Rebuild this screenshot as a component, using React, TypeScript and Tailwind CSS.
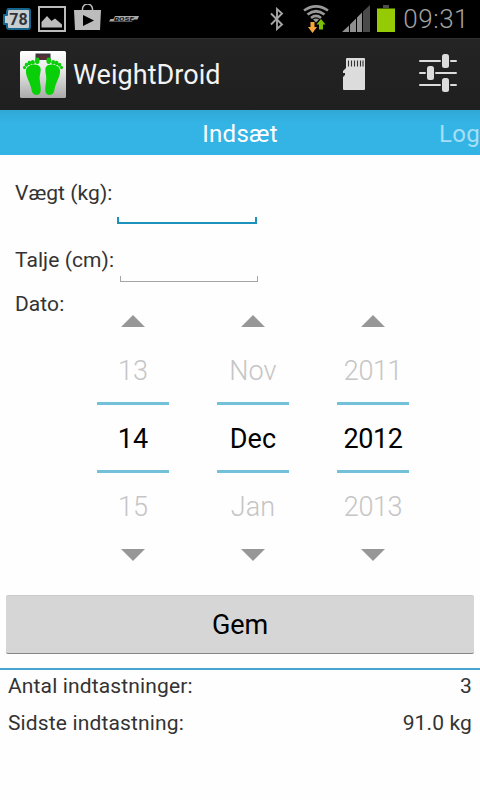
import clsx from 'clsx';

type PickerColumn = {
  id: string;
  previous: string;
  current: string;
  next: string;
};

const PICKER_COLUMNS: PickerColumn[] = [
  { id: 'day', previous: '13', current: '14', next: '15' },
  { id: 'month', previous: 'Nov', current: 'Dec', next: 'Jan' },
  { id: 'year', previous: '2011', current: '2012', next: '2013' },
];

function BatteryBadge() {
  return (
    <svg className="ml-[3px] h-[22px] w-7" viewBox="0 0 28 22" aria-hidden="true">
      <path d="M5 1h20q2 0 2 2v16q0 2-2 2H6q-2 0-2-2v-3H1V7h3V3z" fill="#c8cdd0" stroke="#17658d" strokeWidth="2" strokeLinejoin="round" />
      <text x="15.500" y="16.800" textAnchor="middle" fontFamily="Roboto, sans-serif" fontWeight="700" fontSize="16" fill="#30343a">
        78
      </text>
    </svg>
  );
}

function PictureIcon() {
  return (
    <svg className="ml-[7px] h-[26px] w-7" viewBox="0 0 28 26" aria-hidden="true">
      <path d="M1 1h26v24H1z" fill="none" stroke="#bcbcbc" strokeWidth="2" />
      <path d="M3.500 21.500v-5.500l5.500-6 4.500 5 3.500-2.500 7 6v3z" fill="#bcbcbc" />
    </svg>
  );
}

function PlayStoreIcon() {
  return (
    <svg className="mb-1 ml-2 h-[26px] w-[27px]" viewBox="0 0 27 26" aria-hidden="true">
      <path d="M8.500 7V5a4.500 4.500 0 0 1 10 0v2" fill="none" stroke="#bcbcbc" strokeWidth="1.500" />
      <path d="M0 6h27l-1 20H1z" fill="#bcbcbc" />
      <path d="M9 11l11 5.500L9 22z" fill="#000" />
    </svg>
  );
}

function HeadsetLogo() {
  return (
    <svg className="ml-[8px] h-2 w-[30px]" viewBox="0 0 30 8" aria-hidden="true">
      <path d="M6 1h24l-1.500 3.500H25L23 6.500H0L1.500 4h3z" fill="#aaa" />
      <text x="5" y="6" fontFamily="Roboto, sans-serif" fontWeight="900" fontStyle="italic" fontSize="6" textLength="20" lengthAdjust="spacingAndGlyphs" fill="#151515">
        BOSE
      </text>
    </svg>
  );
}

function BluetoothIcon() {
  return (
    <svg className="h-6 w-4" viewBox="0 0 16 24" aria-hidden="true">
      <path d="M2 6.500l11 11L8 22V2l5 4.500-11 11" fill="none" stroke="#a4a4a4" strokeWidth="1.900" />
    </svg>
  );
}

function WifiIcon() {
  return (
    <svg className="ml-[18px] h-7 w-[26px]" viewBox="0 0 26 28" aria-hidden="true">
      <g fill="none" stroke="#989898" strokeWidth="2.700">
        <path d="M1 5.500Q13-2.600 25 5.500" />
        <path d="M4.500 9.500Q13 3 21.500 9.500" />
        <path d="M8 13Q13 8.800 18 13" />
      </g>
      <path d="M10 14.500q3-2 6 0l-3 3z" fill="#989898" />
      <path d="M7.500 17h4v5h2.500l-4.500 6L5 22h2.500z" fill="#f6a63c" />
      <path d="M16 24.500h4v-5h2.500L18 14l-4.500 5.500H16z" fill="#7cbf08" />
    </svg>
  );
}

function SignalIcon() {
  return (
    <svg className="ml-[13px] h-[27px] w-7" viewBox="0 0 28 27" aria-hidden="true">
      <path d="M0 27l7-6.500V27zM8 19.500l6-6V27H8zM15 12.500l5-5V27h-5z" fill="#8f8f8f" />
      <path d="M21 6.500L28 0v27h-7z" fill="#4a4a4a" />
    </svg>
  );
}

function StatusBattery() {
  return (
    <svg className="ml-[7px] h-[27px] w-[18px]" viewBox="0 0 18 27" aria-hidden="true">
      <path d="M6 0h6v3H6z" fill="#4c4c4c" />
      <path d="M0 3.500h18V27H0z" fill="#94cb05" />
    </svg>
  );
}

function StatusBar() {
  return (
    <div className="flex h-[38px] items-center bg-black">
      <BatteryBadge />
      <PictureIcon />
      <PlayStoreIcon />
      <HeadsetLogo />
      <div className="mb-px ml-auto flex items-center">
        <BluetoothIcon />
        <WifiIcon />
        <SignalIcon />
        <StatusBattery />
      </div>
      <span className="mr-[11px] ml-2 text-[26px] leading-none font-light tracking-[0.5px] whitespace-nowrap text-[#a3a3a3]">
        09:31
      </span>
    </div>
  );
}

const TOES = [
  { cx: 4.5, cy: 16.5, r: 1.5 },
  { cx: 6.5, cy: 13.7, r: 1.7 },
  { cx: 9.4, cy: 12, r: 1.9 },
  { cx: 12.8, cy: 11.2, r: 2 },
];

function Foot() {
  return (
    <g fill="#08cf08">
      <path d="M6 19C7 13 19 11.500 20.500 17c.8 4-1.300 7-.7 12 .3 4 1.200 7 .9 10.500C20.500 45.500 13 45.500 11.800 40 10.500 31 5 25 6 19z" />
      <ellipse cx="17.300" cy="9.800" rx="2.300" ry="3.200" />
      {TOES.map((toe) => (
        <ellipse key={toe.cx} cx={toe.cx} cy={toe.cy} rx={toe.r} ry={toe.r + 0.3} />
      ))}
    </g>
  );
}

function AppLogo() {
  return (
    <svg className="h-[47px] w-[46px]" viewBox="0 0 46 47" aria-hidden="true">
      <defs>
        <linearGradient id="scale" x1="0" y1="0" x2="0" y2="1">
          <stop offset="0" stopColor="#fff" />
          <stop offset="0.45" stopColor="#e4e4e4" />
          <stop offset="1" stopColor="#aaa" />
        </linearGradient>
      </defs>
      <rect width="46" height="47" rx="1.500" fill="url(#scale)" />
      <path d="M15.500 2.500h15V9h-15z" fill="#3c3539" />
      <path d="M18 4.500h10V9H18z" fill="#572f37" />
      <Foot />
      <g transform="matrix(-1 0 0 1 46 0)">
        <Foot />
      </g>
    </svg>
  );
}

function SdCardIcon() {
  return (
    <svg className="h-8 w-[22px]" viewBox="0 0 22 32" aria-hidden="true">
      <path d="M4 0h17q1 0 1 1v30q0 1-1 1H1q-1 0-1-1V19l2-2v-2H0v-2l3-3V1q0-1 1-1z" fill="#dcdcdc" />
      <path d="M5.500 2.500v6M8.500 2.500v6M11.500 2.500v6M14.500 2.500v6M17.500 2.500v6M20 2.500v6" stroke="#333" strokeWidth="1.100" />
    </svg>
  );
}

function SlidersIcon() {
  return (
    <svg className="h-[38px] w-[38px]" viewBox="0 0 38 38" aria-hidden="true">
      <path d="M1 7h20M32 7h5M1 19h5M17 19h20M1 31h20M32 31h5" stroke="#dcdcdc" strokeWidth="2" strokeLinecap="round" />
      <g fill="#dcdcdc">
        <rect x="23" y="0" width="7" height="14" rx="2.500" />
        <rect x="8" y="12" width="7" height="14" rx="2.500" />
        <rect x="23" y="24" width="7" height="14" rx="2.500" />
      </g>
    </svg>
  );
}

function ActionBar() {
  return (
    <header className="flex h-[72px] items-center border-t border-[#303030] bg-gradient-to-b from-[#242424] to-[#1f1f1f] pr-[23px] pl-5">
      <AppLogo />
      <h1 className="ml-[7px] text-[27px] leading-8 tracking-[0.05px] whitespace-nowrap text-[#f3f3f3]">WeightDroid</h1>
      <button type="button" aria-label="SD-kort" className="mb-0.5 ml-auto">
        <SdCardIcon />
      </button>
      <button type="button" aria-label="Indstillinger" className="mb-[3px] ml-[54px]">
        <SlidersIcon />
      </button>
    </header>
  );
}

function Tabs() {
  return (
    <nav className="grid h-[45px] grid-cols-[1fr_80px_1fr] items-center overflow-hidden bg-gradient-to-b from-[#30a8d6] via-[#34b4e5] via-30% to-[#34b4e5] pt-0.5 text-2xl tracking-[0.3px]">
      <span className="col-start-2 text-center whitespace-nowrap text-white">Indsæt</span>
      <span className="text-right whitespace-nowrap text-[#a5dff6]">Log</span>
    </nav>
  );
}

function Arrow({ down }: { down?: boolean }) {
  return (
    <svg className="h-3 w-6" viewBox="0 0 24 12" aria-hidden="true">
      <path d={down ? 'M0 0h24L12 12z' : 'M0 12h24L12 0z'} fill="#979797" />
    </svg>
  );
}

function NumberPicker({ column }: { column: PickerColumn }) {
  return (
    <div
      className={clsx(
        'flex w-[72px] flex-col items-center text-[27px] leading-8',
        column.id === 'year' ? 'tracking-[-0.4px]' : 'tracking-[0.1px]',
      )}
    >
      <Arrow />
      <span className="mt-7 font-light text-[#c5c5c5]">{column.previous}</span>
      <span className="mt-[15px] flex h-[71px] w-full items-center justify-center border-y-[3px] border-[#72c1d9] pt-0.5 text-black">
        {column.current}
      </span>
      <span className="mt-[18px] font-light text-[#c5c5c5]">{column.next}</span>
      <div className="mt-[26px] flex">
        <Arrow down />
      </div>
    </div>
  );
}

function Field({ label, focused }: { label: string; focused?: boolean }) {
  return (
    <label className={clsx('flex pl-[15px]', focused ? 'h-[69px]' : 'h-[58px]')}>
      <span className={clsx('whitespace-nowrap', focused ? 'w-[102px] pt-[25px]' : 'w-[105px] pt-[23px]')}>{label}</span>
      <input
        type="text"
        className={clsx(
          'h-full bg-[linear-gradient(currentColor,currentColor),linear-gradient(currentColor,currentColor)] bg-[position:left_bottom,right_bottom] bg-no-repeat outline-none',
          focused
            ? 'w-[140px] border-b-2 border-[#1c91bb] bg-[size:2px_5px] text-[#1c91bb]'
            : 'w-[138px] border-b border-[#a5a5a5] bg-[size:1px_5px] text-[#a5a5a5]',
        )}
      />
    </label>
  );
}

function SummaryRow({ label, value }: { label: string; value: string }) {
  return (
    <div className="flex h-[37px] justify-between pr-2 pl-2 tracking-[0.14px]">
      <span>{label}</span>
      <span>{value}</span>
    </div>
  );
}

export default function App() {
  return (
    <main className="h-[800px] w-[480px] overflow-hidden bg-[#fefefe] font-['Roboto','Noto_Sans',sans-serif] text-[21px] leading-[26px] tracking-[0.07px] text-[#333]">
      <StatusBar />
      <ActionBar />
      <Tabs />
      <Field label="Vægt (kg):" focused />
      <Field label="Talje (cm):" />
      <section className="flex h-[311px]">
        <span className="w-[97px] pt-[9px] pl-[15px]">Dato:</span>
        <div className="flex gap-12 pt-[33px]">
          {PICKER_COLUMNS.map((column) => (
            <NumberPicker key={column.id} column={column} />
          ))}
        </div>
      </section>
      <div className="px-[6px] pt-[2px]">
        <button
          type="button"
          className="h-[59px] w-full rounded-[2px] border-t border-b border-t-[#cbcbcb] border-b-[#858585] bg-[#d6d6d6] text-[27px] tracking-[-0.2px] text-black"
        >
          Gem
        </button>
      </div>
      <section className="mt-[14px] border-t-2 border-[#45a5d0] pt-[3px]">
        <SummaryRow label="Antal indtastninger:" value="3" />
        <SummaryRow label="Sidste indtastning:" value="91.0 kg" />
      </section>
    </main>
  );
}
